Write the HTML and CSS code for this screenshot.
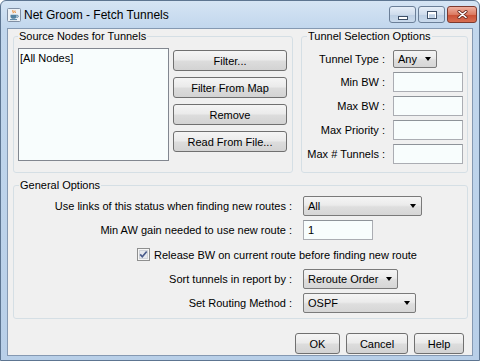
FILE: index.html
```html
<!DOCTYPE html>
<html lang="en">
<head>
  <meta charset="UTF-8">
  <title>Net Groom - Fetch Tunnels</title>
  <link rel="stylesheet" href="styles.css">
</head>
<body>
  <div class="window">
    <div class="titlebar">
      <span class="app-icon">
        <svg width="14" height="14" viewBox="0 0 14 14">
          <rect x="0.5" y="0.5" width="13" height="13" rx="1" fill="#eef2f6" stroke="#7f8ea3"/>
          <path d="M6 2.2c-1 1 1 1.8 0 3M8 2.6c-1 .9 1 1.4 0 2.4" stroke="#e76f00" fill="none"/>
          <path d="M3.5 6.8h6v1.6c0 1.5-1.2 2.4-3 2.4s-3-.9-3-2.4z" fill="#5382a1"/>
          <path d="M9.5 7.3h.8a1 1 0 0 1 0 2h-.8" stroke="#5382a1" fill="none"/>
          <path d="M3 11.6h7" stroke="#5382a1"/>
        </svg>
      </span>
      <span class="title">Net Groom - Fetch Tunnels</span>
      <div class="win-buttons">
        <span class="win-btn"><span class="glyph-min"></span></span>
        <span class="win-btn"><span class="glyph-max"></span></span>
        <span class="win-btn close">
          <svg width="11" height="9" viewBox="0 0 11 9">
            <path d="M2 1.5l7 6M9 1.5l-7 6" stroke="#6b2a20" stroke-width="3.2" stroke-linecap="round"/>
            <path d="M2 1.5l7 6M9 1.5l-7 6" stroke="#fff" stroke-width="1.6" stroke-linecap="round"/>
          </svg>
        </span>
      </div>
    </div>

    <div class="client">
      <div class="top-row">
        <fieldset class="group source">
          <legend>Source Nodes for Tunnels</legend>
          <div class="source-body">
            <div class="node-list">
              <div class="node-item">[All Nodes]</div>
            </div>
            <div class="source-buttons">
              <button class="btn">Filter...</button>
              <button class="btn">Filter From Map</button>
              <button class="btn">Remove</button>
              <button class="btn">Read From File...</button>
            </div>
          </div>
        </fieldset>

        <fieldset class="group tunnel">
          <legend>Tunnel Selection Options</legend>
          <div class="tunnel-grid">
            <label>Tunnel Type :</label>
            <div class="combo combo-type">Any</div>
            <label>Min BW :</label>
            <input class="field" type="text">
            <label>Max BW :</label>
            <input class="field" type="text">
            <label>Max Priority :</label>
            <input class="field" type="text">
            <label>Max # Tunnels :</label>
            <input class="field" type="text">
          </div>
        </fieldset>
      </div>

      <fieldset class="group general">
        <legend>General Options</legend>
        <div class="general-grid">
          <label>Use links of this status when finding new routes :</label>
          <div class="combo combo-status">All</div>
          <label>Min AW gain needed to use new route :</label>
          <input class="field" type="text" value="1">
          <div class="check-row">
            <span class="check">
              <svg width="13" height="13" viewBox="0 0 13 13">
                <rect x="0.5" y="0.5" width="12" height="12" fill="#f6f6f6" stroke="#8e8f8f"/>
                <rect x="2.5" y="2.5" width="8" height="8" fill="#e6e9ee" stroke="#d0d4da"/>
                <path d="M3.2 6.4l2.1 2.4 4.4-5.3" stroke="#4a5c8c" stroke-width="1.7" fill="none"/>
              </svg>
            </span>
            <span>Release BW on current route before finding new route</span>
          </div>
          <label>Sort tunnels in report by :</label>
          <div class="combo combo-sort">Reroute Order</div>
          <label>Set Routing Method :</label>
          <div class="combo combo-route">OSPF</div>
        </div>
      </fieldset>

      <div class="actions">
        <button class="btn btn-ok">OK</button>
        <button class="btn btn-cancel">Cancel</button>
        <button class="btn btn-help">Help</button>
      </div>
    </div>
  </div>
</body>
</html>
```

FILE: styles.css
```css
* {
  box-sizing: border-box;
}
body {
  margin: 0;
  font-family: "Liberation Sans", Arial, sans-serif;
  font-size: 11px;
  color: #000;
  background: #fff;
}
.window {
  width: 480px;
  height: 361px;
  border: 1px solid #5d7591;
  border-radius: 6px 6px 0 0;
  background: linear-gradient(#d5e4f4, #c2d7ed 27px, #b8cfe8);
  display: flex;
  flex-direction: column;
  padding-bottom: 4px;
  overflow: hidden;
}
.titlebar {
  height: 27px;
  flex: none;
  display: flex;
  align-items: center;
  padding-left: 6px;
}
.app-icon {
  display: flex;
}
.title {
  margin-left: 3px;
  font-size: 12px;
}
.win-buttons {
  margin-left: auto;
  align-self: flex-start;
  margin-top: 5px;
  margin-right: 2px;
  display: flex;
  gap: 2px;
}
.win-btn {
  width: 27px;
  height: 17px;
  border: 1px solid #6b7f98;
  border-radius: 3px;
  background: linear-gradient(#e6eef8, #cfdcec 50%, #bccee3 51%, #cadaec);
  display: flex;
  align-items: center;
  justify-content: center;
}
.win-btn.close {
  width: 30px;
  border-color: #7d3a2f;
  background: linear-gradient(#eeb0a0, #dc7b62 50%, #c94e33 51%, #d86e52);
}
.glyph-min {
  width: 10px;
  height: 4px;
  margin-top: 6px;
  border: 1px solid #3f5068;
  background: #fff;
}
.glyph-max {
  width: 10px;
  height: 8px;
  border: 1px solid #3f5068;
  box-shadow: inset 0 1px 0 1px #fff;
}

.client {
  flex: 1;
  margin: 0 6px;
  border: 1px solid #8599b2;
  background: #f0f0f0;
  padding: 1px 4px 0 5px;
  display: flex;
  flex-direction: column;
}
.top-row {
  display: flex;
  gap: 8px;
}
.group {
  margin: 0;
  min-width: 0;
  border: 1px solid #d5dfe5;
  border-radius: 3px;
}
.group legend {
  padding: 0 1px;
  line-height: 13px;
}
.source {
  width: 280px;
  flex: none;
  padding: 5px 5px 8px 4px;
}
.tunnel {
  flex: 1;
  padding: 7px 4px 8px 5px;
}
.source-body {
  display: flex;
  align-items: flex-start;
}
.node-list {
  width: 151px;
  height: 113px;
  border: 1px solid #828790;
  background: #f8fdfd;
  padding: 3px 1px;
}
.node-item {
  line-height: 13px;
}
.source-buttons {
  margin-left: 4px;
  margin-top: 2px;
  display: flex;
  flex-direction: column;
  gap: 6px;
}
.source-buttons .btn {
  width: 114px;
}
.btn {
  height: 21px;
  padding: 0;
  font: inherit;
  color: #000;
  border: 1px solid #707070;
  border-radius: 3px;
  background: linear-gradient(#f5f5f5, #ebebeb 45%, #dcdcdc 55%, #d3d3d3);
}

.tunnel-grid {
  display: grid;
  grid-template-columns: 1fr 70px;
  column-gap: 8px;
  row-gap: 4px;
  align-items: center;
}
.tunnel-grid label,
.general-grid label {
  text-align: right;
  white-space: nowrap;
}
.field {
  width: 70px;
  height: 20px;
  margin: 0;
  padding: 0 4px;
  font: inherit;
  color: #000;
  border: 1px solid #abadb3;
  border-top-color: #8e9399;
  background: #f8fdfd;
  outline: none;
}
.combo {
  height: 20px;
  display: flex;
  align-items: center;
  justify-content: space-between;
  padding: 0 5px 0 4px;
  border: 1px solid #7a7a7a;
  border-radius: 2px;
  background: linear-gradient(#f5f5f5, #ebebeb 45%, #dedede 55%, #d6d6d6);
}
.combo::after {
  content: "";
  border-style: solid;
  border-width: 4px 3.5px 0 3.5px;
  border-color: #000 transparent transparent transparent;
}
.combo-type {
  width: 44px;
  height: 18px;
}
.combo-status {
  width: 119px;
}
.combo-sort {
  width: 95px;
}
.combo-route {
  width: 113px;
}

.general {
  margin-top: 6px;
  padding: 4px 45px 5px 5px;
}
.general-grid {
  display: grid;
  grid-template-columns: 1fr 119px;
  column-gap: 11px;
  row-gap: 4px;
  align-items: center;
  justify-items: start;
}
.general-grid label {
  justify-self: end;
}
.check-row {
  grid-column: 1 / -1;
  justify-self: end;
  height: 21px;
  margin-right: 5px;
  display: flex;
  align-items: center;
  gap: 4px;
}
.check {
  display: flex;
}

.actions {
  margin-top: 14px;
  padding-right: 4px;
  display: flex;
  justify-content: flex-end;
  gap: 6px;
}
.btn-ok {
  width: 45px;
}
.btn-cancel {
  width: 62px;
}
.btn-help {
  width: 50px;
}
```
